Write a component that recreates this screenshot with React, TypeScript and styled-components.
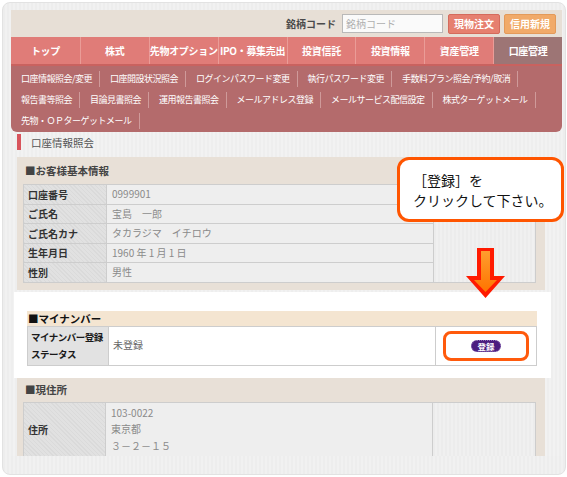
import React from 'react'
import styled, { createGlobalStyle } from 'styled-components'

const FONT = '"Noto Sans CJK JP", "Noto Sans", sans-serif'

const GlobalStyle = createGlobalStyle`
  html, body {
    margin: 0;
    padding: 0;
    background: #ffffff;
  }
  body {
    font-family: ${FONT};
  }
  * {
    box-sizing: border-box;
  }
`

const TABS = ['トップ', '株式', '先物オプション', 'IPO・募集売出', '投資信託', '投資情報', '資産管理', '口座管理']

const SUB_ROWS = [
  ['口座情報照会/変更', '口座開設状況照会', 'ログインパスワード変更', '執行パスワード変更', '手数料プラン照会/予約/取消'],
  ['報告書等照会', '目論見書照会', '運用報告書照会', 'メールアドレス登録', 'メールサービス配信設定', '株式ターゲットメール'],
  ['先物・ＯＰターゲットメール']
]

const BASIC_INFO = [
  { label: '口座番号', value: '0999901' },
  { label: 'ご氏名', value: '宝島　一郎' },
  { label: 'ご氏名カナ', value: 'タカラジマ　イチロウ' },
  { label: '生年月日', value: '1960 年 1 月 1 日' },
  { label: '性別', value: '男性' }
]

const Stage = styled.div`
  position: relative;
  width: 567px;
  height: 477px;
  padding: 2px 1px 2px 2px;
`

const Frame = styled.div`
  height: 473px;
  background: repeating-linear-gradient(90deg, #ededed 0 2px, #f1f1f1 2px 4px);
  border: 1px solid #e2e2e2;
  border-radius: 8px;
  padding: 7px 3px 18px 8px;
`

const Page = styled.div`
  height: 446px;
  overflow: hidden;
  background: repeating-linear-gradient(90deg, #eeeeee 0 2px, #f2f2f2 2px 4px);
  display: flex;
  flex-direction: column;
`

const TopBar = styled.div`
  height: 27px;
  flex: none;
  background: #e7dfd6;
  display: flex;
  align-items: center;
  justify-content: flex-end;
  padding-right: 6px;
`

const CodeLabel = styled.span`
  font-size: 10px;
  font-weight: bold;
  color: #4a4a4a;
  margin-right: 6px;
`

const CodeInput = styled.input`
  width: 101px;
  height: 19px;
  border: 1px solid #b9b9b9;
  background: #fafafa;
  padding: 0 3px;
  font-family: ${FONT};
  font-size: 10px;
  margin-right: 5px;
  &::placeholder {
    color: #b0b0b0;
  }
`

const OrderButton = styled.button<{ $tone: 'red' | 'orange' }>`
  width: 52px;
  height: 20px;
  border: 1px solid ${({ $tone }) => ($tone === 'red' ? '#d46b5c' : '#e39a5a')};
  background: ${({ $tone }) => ($tone === 'red' ? '#e6806f' : '#f1aa69')};
  border-radius: 2px;
  color: #fff;
  font-family: ${FONT};
  font-size: 10px;
  font-weight: bold;
  padding: 0;
  & + & {
    margin-left: 4px;
  }
`

const TabBar = styled.div`
  height: 29px;
  flex: none;
  display: grid;
  grid-template-columns: repeat(8, 1fr);
  background: #e07c78;
  border-bottom: 2px solid #c9625f;
`

const Tab = styled.div<{ $active?: boolean }>`
  display: flex;
  align-items: center;
  justify-content: center;
  color: #fff;
  font-size: 10px;
  font-weight: bold;
  letter-spacing: -0.3px;
  white-space: nowrap;
  background: ${({ $active }) => ($active ? '#9d7575' : 'transparent')};
  border-left: 1px solid #ea9c97;
  &:first-child {
    border-left: none;
  }
`

const SubMenu = styled.div`
  flex: none;
  background: #b46b6c;
  border-radius: 0 0 6px 6px;
  padding: 2px 0 1px;
`

const SubRow = styled.div`
  height: 21px;
  display: flex;
  align-items: center;
`

const SubItem = styled.span`
  height: 16px;
  line-height: 16px;
  padding: 0 7px 0 10px;
  border-right: 1px solid #cf9a9a;
  color: #fff;
  font-size: 9px;
  letter-spacing: -0.5px;
  white-space: nowrap;
`

const Title = styled.div`
  flex: none;
  height: 16px;
  margin: 2px 0 7px 6px;
  border-left: 4px solid #d8545c;
  padding-left: 10px;
  display: flex;
  align-items: center;
  font-size: 10.5px;
  color: #555;
`

const Section = styled.div`
  flex: none;
  margin: 0 17px 0 6px;
  background: #e8e0d7;
  padding: 0 9px 7px 6px;
`

const SectionHead = styled.div<{ $height: number }>`
  height: ${({ $height }) => $height}px;
  display: flex;
  align-items: center;
  padding-left: 2px;
  font-size: 10.5px;
  font-weight: bold;
  color: #444;
`

const InfoGrid = styled.div<{ $labelWidth: number }>`
  display: grid;
  grid-template-columns: ${({ $labelWidth }) => $labelWidth}px 327px 1fr;
  border-top: 1px solid #cdcdcd;
  border-left: 1px solid #cdcdcd;
`

const LabelCell = styled.div<{ $height: number }>`
  grid-column: 1;
  height: ${({ $height }) => $height}px;
  display: flex;
  align-items: center;
  padding-left: 4px;
  background: repeating-linear-gradient(45deg, #dadada 0 1px, #e1e1e1 1px 3px);
  border-right: 1px solid #cdcdcd;
  border-bottom: 1px solid #cdcdcd;
  font-size: 10px;
  font-weight: bold;
  color: #333;
  white-space: nowrap;
`

const ValueCell = styled.div<{ $height: number }>`
  grid-column: 2;
  height: ${({ $height }) => $height}px;
  display: flex;
  flex-direction: column;
  justify-content: center;
  padding-left: 5px;
  background: #eeeeee;
  border-right: 1px solid #cdcdcd;
  border-bottom: 1px solid #cdcdcd;
  font-size: 10px;
  line-height: 16.5px;
  color: #8a8a8a;
  white-space: nowrap;
`

const SideCell = styled.div<{ $rows: number }>`
  grid-column: 3;
  grid-row: 1 / span ${({ $rows }) => $rows};
  background: repeating-linear-gradient(90deg, #ececec 0 2px, #f0f0f0 2px 4px);
  border-right: 1px solid #cdcdcd;
  border-bottom: 1px solid #cdcdcd;
`

const Highlight = styled.div`
  flex: none;
  margin: 2px 11px 0 3px;
  background: #ffffff;
  padding: 19px 14px 12px 13px;
`

const BandHead = styled.div`
  height: 15px;
  display: flex;
  align-items: center;
  padding-left: 1px;
  background: #f4e5d1;
  font-size: 10.5px;
  font-weight: bold;
  color: #111;
`

const MyNumberLabel = styled(LabelCell)`
  background: #e2e2e2;
  line-height: 17px;
  color: #1a1a1a;
  padding-left: 3px;
  font-size: 9.5px;
  letter-spacing: -0.5px;
`

const MyNumberValue = styled(ValueCell)`
  background: #ffffff;
  color: #666;
  padding-left: 4px;
`

const ButtonCell = styled.div`
  grid-column: 3;
  display: flex;
  align-items: center;
  justify-content: center;
  background: #ffffff;
  border-right: 1px solid #cdcdcd;
  border-bottom: 1px solid #cdcdcd;
`

const Ring = styled.div`
  width: 86px;
  height: 30px;
  border: 3px solid #ff5a0c;
  border-radius: 8px;
  display: flex;
  align-items: center;
  justify-content: center;
`

const RegisterPill = styled.span`
  width: 30px;
  height: 12px;
  border-radius: 6px;
  background: #4b1e7f;
  border: 1px dotted #8e6fb8;
  color: #fff;
  font-size: 8.5px;
  font-weight: bold;
  line-height: 10px;
  text-align: center;
`

const Callout = styled.div`
  position: absolute;
  left: 397px;
  top: 157px;
  width: 167px;
  height: 65px;
  border: 3px solid #ff5500;
  border-radius: 12px;
  background: #ffffff;
  padding: 10px 0 0 13px;
  font-size: 14px;
  line-height: 20px;
  color: #111;
  white-space: nowrap;
`

const ArrowSvg = styled.svg`
  position: absolute;
  left: 465px;
  top: 246px;
`

const DownArrow = () => (
  <ArrowSvg width="42" height="54" viewBox="0 0 42 54">
    <defs>
      <linearGradient id="arrowFill" x1="0" y1="0" x2="0" y2="1">
        <stop offset="0" stopColor="#ff9d2e" />
        <stop offset="1" stopColor="#ff7400" />
      </linearGradient>
    </defs>
    <polygon points="12,2 29,2 29,30 40,30 20.5,52 1,30 12,30" fill="#ff1a00" />
    <polygon points="16,5 25,5 25,34 32,34 20.5,46 9,34 16,34" fill="url(#arrowFill)" />
  </ArrowSvg>
)

export default function App() {
  return (
    <Stage>
      <GlobalStyle />
      <Frame>
        <Page>
          <TopBar>
            <CodeLabel>銘柄コード</CodeLabel>
            <CodeInput placeholder="銘柄コード" />
            <OrderButton $tone="red">現物注文</OrderButton>
            <OrderButton $tone="orange">信用新規</OrderButton>
          </TopBar>

          <TabBar>
            {TABS.map((t, i) => (
              <Tab key={t} $active={i === TABS.length - 1}>
                {t}
              </Tab>
            ))}
          </TabBar>

          <SubMenu>
            {SUB_ROWS.map((row, i) => (
              <SubRow key={i}>
                {row.map((item) => (
                  <SubItem key={item}>{item}</SubItem>
                ))}
              </SubRow>
            ))}
          </SubMenu>

          <Title>口座情報照会</Title>

          <Section>
            <SectionHead $height={27}>■お客様基本情報</SectionHead>
            <InfoGrid $labelWidth={83}>
              <SideCell $rows={BASIC_INFO.length} />
              {BASIC_INFO.map((row) => (
                <React.Fragment key={row.label}>
                  <LabelCell $height={19.5}>{row.label}</LabelCell>
                  <ValueCell $height={19.5}>{row.value}</ValueCell>
                </React.Fragment>
              ))}
            </InfoGrid>
          </Section>

          <Highlight>
            <BandHead>■マイナンバー</BandHead>
            <InfoGrid $labelWidth={81}>
              <MyNumberLabel $height={39}>
                マイナンバー登録
                <br />
                ステータス
              </MyNumberLabel>
              <MyNumberValue $height={39}>未登録</MyNumberValue>
              <ButtonCell>
                <Ring>
                  <RegisterPill>登録</RegisterPill>
                </Ring>
              </ButtonCell>
            </InfoGrid>
          </Highlight>

          <Section>
            <SectionHead $height={24}>■現住所</SectionHead>
            <InfoGrid $labelWidth={82}>
              <SideCell $rows={2} />
              <LabelCell $height={55}>住所</LabelCell>
              <ValueCell $height={55}>
                <span>103-0022</span>
                <span>東京都</span>
                <span>３－２－１５</span>
              </ValueCell>
              <LabelCell $height={24} />
              <ValueCell $height={24} />
            </InfoGrid>
          </Section>
        </Page>
      </Frame>

      <Callout>
        ［登録］を
        <br />
        クリックして下さい。
      </Callout>
      <DownArrow />
    </Stage>
  )
}
